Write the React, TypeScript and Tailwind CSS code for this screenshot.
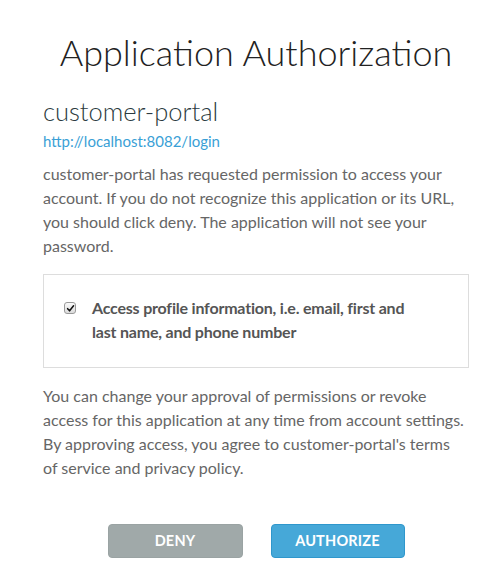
export default function App() {
  return (
    <div
      className="w-[500px] h-[588px] bg-white pl-[43px] pr-[31px] text-[#666]"
      style={{ fontFamily: 'Lato, "Open Sans", sans-serif' }}
    >
      <h1 className="pt-[28px] text-center text-[36px] leading-[48px] font-light text-[#222]">
        Application Authorization
      </h1>

      <h2 className="mt-[21px] text-[25.5px] leading-[28px] font-light text-[#2b3a40]">customer-portal</h2>
      <a className="block mt-[6px] text-[15px] leading-[20px] text-[#3a9fd6]">http://localhost:8082/login</a>

      <p className="mt-[11px] text-[16px] leading-[24px]">
        customer-portal has requested permission to access your account. If you do not recognize
        this application or its URL, you should click deny. The application will not see your
        password.
      </p>

      {/* Permission box */}
      <div className="mt-[16px] border border-[#ddd] pl-[20px] pr-[44px] pt-[21px] pb-[23px] flex gap-[16px]">
        <span className="mt-[6px] w-[12px] h-[12px] shrink-0 rounded-[3px] border border-[#9a9a9a] bg-gradient-to-b from-[#fafafa] to-[#dcdcdc] flex items-center justify-center">
          <svg viewBox="0 0 10 10" className="w-[9px] h-[9px]">
            <path d="M1.8 5.2 L4 7.6 L8.4 2" fill="none" stroke="#111" strokeWidth="1.7" strokeLinecap="round" strokeLinejoin="round" />
          </svg>
        </span>
        <div className="text-[16px] leading-[24px] font-bold text-[#555] tracking-[-0.2px]">
          Access profile information, i.e. email, first and last name, and phone number
        </div>
      </div>

      <p className="mt-[16px] mr-[3px] text-[16px] leading-[24px]">
        You can change your approval of permissions or revoke access for this application at any
        time from account settings. By approving access, you agree to customer-portal's terms of
        service and privacy policy.
      </p>

      {/* Buttons */}
      <div className="mt-[44px] flex justify-center gap-[28px]">
        <button className="w-[135px] h-[34px] rounded-[4px] bg-[#a0a9a9] border border-[#9aa3a3] text-white text-[14.5px] font-bold tracking-[0.2px]">
          DENY
        </button>
        <button className="w-[134px] h-[34px] rounded-[4px] bg-[#46a8d8] border border-[#2f97cc] text-white text-[14.5px] font-bold tracking-[0.2px]">
          AUTHORIZE
        </button>
      </div>
    </div>
  )
}
